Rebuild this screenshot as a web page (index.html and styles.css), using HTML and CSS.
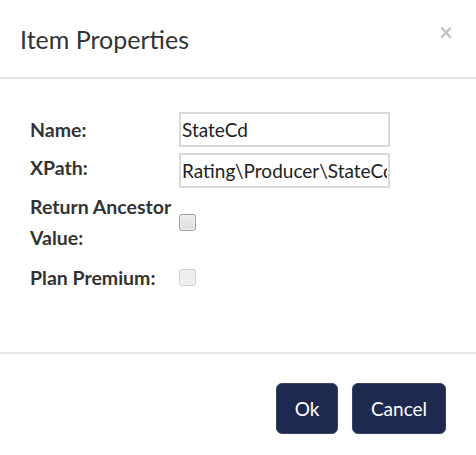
FILE: index.html
```html
<!DOCTYPE html>
<html>
<head>
<meta charset="utf-8">
<link rel="stylesheet" href="styles.css">
</head>
<body>
<div class="modal">
  <div class="modal-header">
    <h4 class="title">Item Properties</h4>
    <span class="close">&times;</span>
  </div>
  <div class="modal-body">
    <div class="row row-name">
      <label class="lbl">Name:</label>
      <input class="field" type="text" value="StateCd">
    </div>
    <div class="row row-xpath">
      <label class="lbl">XPath:</label>
      <input class="field" type="text" value="Rating\Producer\StateCd">
    </div>
    <div class="row row-ancestor">
      <label class="lbl">Return Ancestor<br>Value:</label>
      <span class="check"></span>
    </div>
    <div class="row row-plan">
      <label class="lbl">Plan Premium:</label>
      <span class="check disabled"></span>
    </div>
  </div>
  <div class="modal-footer">
    <button class="btn btn-ok">Ok</button>
    <button class="btn btn-cancel">Cancel</button>
  </div>
</div>
</body>
</html>
```

FILE: styles.css
```css
html, body {
  margin: 0;
  padding: 0;
  background: #fff;
}
body {
  font-family: Lato, "Open Sans", sans-serif;
  color: #333;
  width: 476px;
  height: 455px;
  overflow: hidden;
}
.modal {
  width: 476px;
}
.modal-header {
  height: 79px;
  border-bottom: 2px solid #e5e5e5;
  display: flex;
  align-items: flex-start;
  justify-content: space-between;
  padding: 0 23px 0 20px;
  box-sizing: border-box;
}
.title {
  margin: 0;
  padding-top: 24px;
  font-size: 25px;
  line-height: 30px;
  font-weight: 400;
  color: #333;
}
.close {
  padding-top: 17px;
  font-size: 24px;
  line-height: 30px;
  color: #c2c2c2;
  font-family: Lato, sans-serif;
  font-weight: 700;
}
.modal-body {
  height: 275px;
  padding: 33px 0 0 30px;
  box-sizing: border-box;
  border-bottom: 2px solid #e5e5e5;
}
.row {
  display: flex;
  align-items: center;
}
.lbl {
  width: 149px;
  flex: none;
  font-weight: 700;
  font-size: 19.5px;
  line-height: 31px;
  color: #333;
  white-space: nowrap;
}
.field {
  width: 211px;
  height: 35px;
  box-sizing: border-box;
  border: 2px solid #d9d9d9;
  padding: 0 1px;
  margin: 0;
  font-family: Lato, "Open Sans", sans-serif;
  font-size: 19px;
  color: #222;
  outline: none;
}
.row-xpath {
  margin-top: 6px;
}
.row-xpath .lbl {
  margin-top: -6px;
}
.row-ancestor {
  margin-top: 3px;
}
.row-plan {
  margin-top: 9px;
}
.check {
  width: 17px;
  height: 17px;
  box-sizing: border-box;
  border: 1px solid #9a9a9a;
  border-radius: 3px;
  background: linear-gradient(#ececec, #dcdcdc);
  box-shadow: inset 0 0 0 1px #f2f2f2;
}
.check.disabled {
  border-color: #cfcfcf;
  background: #eeeeee;
}
.modal-footer {
  display: flex;
  justify-content: flex-end;
  gap: 14px;
  padding: 29px 30px 0 0;
}
.btn {
  height: 51px;
  border: 1px solid #3a4466;
  border-radius: 6px;
  background: #1e2950;
  color: #fff;
  font-family: Lato, "Open Sans", sans-serif;
  font-size: 19px;
  padding: 0;
  cursor: pointer;
}
.btn-ok {
  width: 62px;
}
.btn-cancel {
  width: 94px;
}
```
